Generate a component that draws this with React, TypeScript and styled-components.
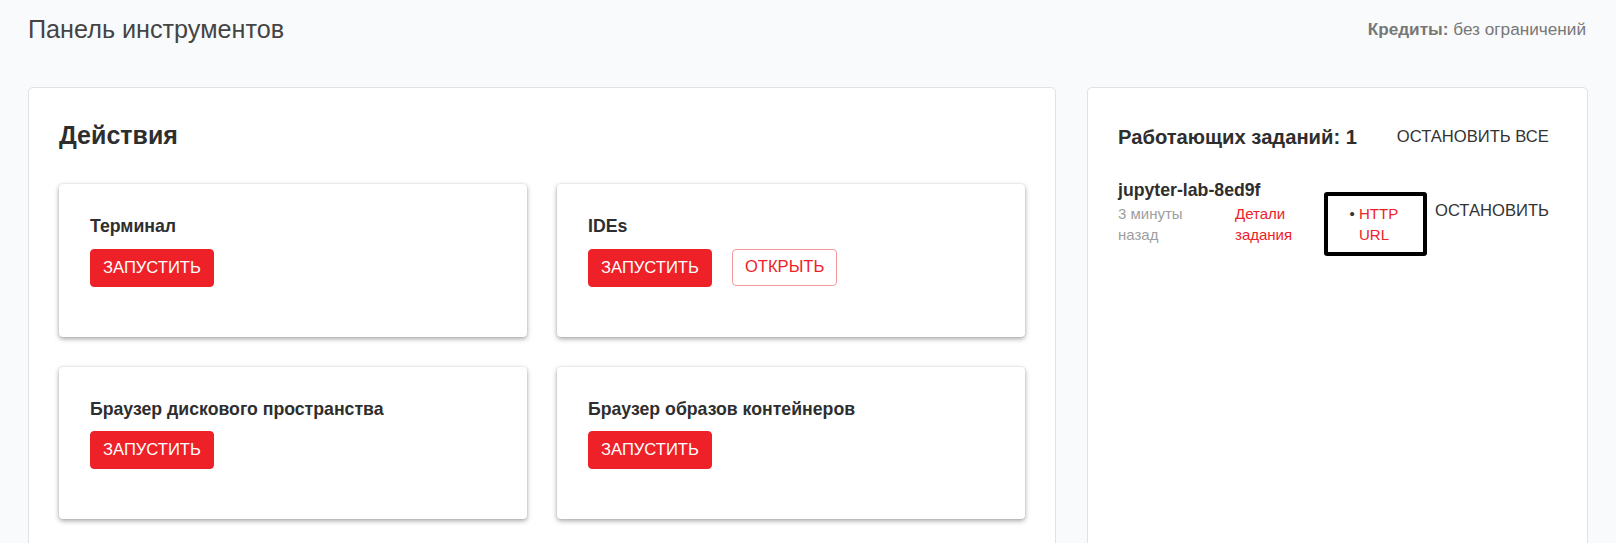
import React from "react";
import styled, { createGlobalStyle } from "styled-components";

const GlobalStyle = createGlobalStyle`
  html, body {
    margin: 0;
    padding: 0;
    background: #f9fafc;
    font-family: "Liberation Sans", Arial, sans-serif;
    color: #333;
  }
  * { box-sizing: border-box; }
`;

const RED = "#ee2128";

const Page = styled.div`
  padding: 15px 30px 0 28px;
  min-height: 543px;
  overflow: hidden;
`;

const TopBar = styled.header`
  display: flex;
  justify-content: space-between;
  align-items: center;
`;

const PageTitle = styled.h1`
  margin: 0;
  font-size: 25.2px;
  font-weight: 400;
  color: #444;
  line-height: normal;
`;

const Credits = styled.div`
  font-size: 17.2px;
  color: #777;
  b { font-weight: 700; }
`;

const Columns = styled.div`
  display: grid;
  grid-template-columns: 1028px 1fr;
  gap: 31px;
  margin-top: 43px;
`;

const Panel = styled.section`
  background: #fff;
  border: 1px solid #e2e2e2;
  border-radius: 5px;
  padding: 33px 30px 30px;
`;

const SectionTitle = styled.h2`
  margin: 0 0 34px;
  font-size: 25px;
  font-weight: 700;
  color: #2e2e2e;
  line-height: normal;
`;

const CardGrid = styled.div`
  display: grid;
  grid-template-columns: 1fr 1fr;
  gap: 30px;
`;

const Card = styled.div`
  background: #fff;
  border-radius: 4px;
  padding: 32px 31px 50px;
  box-shadow: 0 2px 5px rgba(0, 0, 0, 0.34), 0 0 2px rgba(0, 0, 0, 0.12);
`;

const CardTitle = styled.h3`
  margin: 0 0 11.5px;
  font-size: 17.7px;
  font-weight: 700;
  color: #2e2e2e;
  line-height: normal;
`;

const ButtonRow = styled.div`
  display: flex;
  gap: 20px;
`;

const ActionButton = styled.button<{ $variant?: "solid" | "outline" }>`
  display: inline-flex;
  align-items: center;
  height: ${(p) => (p.$variant === "outline" ? "37px" : "38px")};
  padding: 0 12px;
  font-family: inherit;
  font-size: 16.6px;
  text-transform: uppercase;
  border-radius: 4px;
  cursor: pointer;
  border: 1px solid ${(p) => (p.$variant === "outline" ? "#f39a9e" : RED)};
  background: ${(p) => (p.$variant === "outline" ? "#fff" : RED)};
  color: ${(p) => (p.$variant === "outline" ? RED : "#fff")};
`;

const JobsHeader = styled.div`
  display: flex;
  justify-content: space-between;
  align-items: center;
  min-height: 31px;
`;

const JobsTitle = styled.h2`
  margin: 0;
  font-size: 20.2px;
  font-weight: 700;
  color: #2e2e2e;
  line-height: normal;
`;

const TextButton = styled.button<{ $offset?: number }>`
  padding: 6px 8px;
  margin-top: ${(p) => p.$offset ?? 0}px;
  background: transparent;
  border: none;
  font-family: inherit;
  font-size: 16.6px;
  line-height: normal;
  color: #333;
  text-transform: uppercase;
  cursor: pointer;
`;

const JobRow = styled.div`
  display: flex;
  justify-content: space-between;
  align-items: flex-start;
  margin-top: 27px;
`;

const JobMain = styled.div`
  width: 206px;
`;

const JobName = styled.div`
  font-size: 17.7px;
  font-weight: 700;
  color: #2e2e2e;
  line-height: 20px;
`;

const JobMeta = styled.div`
  display: grid;
  grid-template-columns: 117px 1fr;
  margin-top: 2.5px;
  font-size: 15px;
  line-height: 21.6px;
`;

const JobTime = styled.div`
  color: #9e9e9e;
  padding-right: 16px;
`;

const JobLink = styled.a`
  color: ${RED};
  text-decoration: none;
  padding-right: 16px;
`;

const UrlBox = styled.div`
  width: 103px;
  margin-top: 12px;
  border: 4px solid #000;
  border-radius: 3px;
  padding: 6.5px 4px 6px 0;
`;

const UrlList = styled.ul`
  margin: 0;
  padding-left: 31px;
  font-size: 15px;
  line-height: 21.6px;
  color: #333;
  li::marker {
    content: "• ";
  }
  li a {
    color: ${RED};
    text-decoration: none;
  }
`;

const actions = [
  { title: "Терминал", open: false },
  { title: "IDEs", open: true },
  { title: "Браузер дискового пространства", open: false },
  { title: "Браузер образов контейнеров", open: false },
];

export default function App() {
  return (
    <>
      <GlobalStyle />
      <Page>
        <TopBar>
          <PageTitle>Панель инструментов</PageTitle>
          <Credits>
            <b>Кредиты:</b> без ограничений
          </Credits>
        </TopBar>
        <Columns>
          <Panel>
            <SectionTitle>Действия</SectionTitle>
            <CardGrid>
              {actions.map((a) => (
                <Card key={a.title}>
                  <CardTitle>{a.title}</CardTitle>
                  <ButtonRow>
                    <ActionButton $variant="solid">Запустить</ActionButton>
                    {a.open && <ActionButton $variant="outline">Открыть</ActionButton>}
                  </ButtonRow>
                </Card>
              ))}
            </CardGrid>
          </Panel>
          <Panel>
            <JobsHeader>
              <JobsTitle>Работающих заданий: 1</JobsTitle>
              <TextButton>Остановить все</TextButton>
            </JobsHeader>
            <JobRow>
              <JobMain>
                <JobName>jupyter-lab-8ed9f</JobName>
                <JobMeta>
                  <JobTime>3 минуты назад</JobTime>
                  <JobLink href="#">Детали задания</JobLink>
                </JobMeta>
              </JobMain>
              <UrlBox>
                <UrlList>
                  <li>
                    <a href="#">HTTP URL</a>
                  </li>
                </UrlList>
              </UrlBox>
              <TextButton $offset={15}>Остановить</TextButton>
            </JobRow>
          </Panel>
        </Columns>
      </Page>
    </>
  );
}
